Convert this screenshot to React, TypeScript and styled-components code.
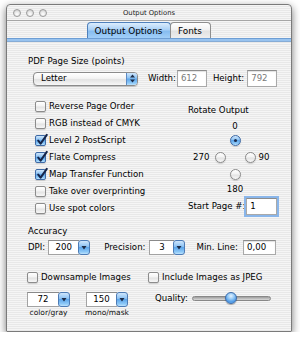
import React from "react";
import styled, { createGlobalStyle } from "styled-components";

const Global = createGlobalStyle`
  html, body { margin: 0; padding: 0; background: #ffffff; }
  body { font-family: "DejaVu Sans", "Liberation Sans", sans-serif; color: #000; }
  * { box-sizing: border-box; }
`;

const aquaBlue = "linear-gradient(to bottom, #cfe6fc 0%, #8cc2f3 42%, #5ea6ea 50%, #8fcaf8 85%, #bfe4fd 100%)";
const aquaWhite = "linear-gradient(to bottom, #ffffff 0%, #f3f3f3 45%, #e3e3e3 55%, #f7f7f7 100%)";

const Window = styled.div`
  margin: 4px 0 0 6px;
  width: 286px;
  height: 328px;
  border: 1px solid #7a7a7a;
  border-radius: 4px 4px 1px 1px;
  box-shadow: 0 3px 8px rgba(0, 0, 0, 0.55);
  background: repeating-linear-gradient(to bottom, #f5f5f5 0px, #f5f5f5 1px, #e8e8e8 1px, #e8e8e8 2px);
  display: flex;
  flex-direction: column;
  overflow: hidden;
`;

const TitleBar = styled.div`
  height: 16px;
  border-bottom: 1px solid #a6a6a6;
  display: grid;
  grid-template-columns: 1fr auto 1fr;
  align-items: center;
  padding: 0 6px;
`;

const Lights = styled.div`
  display: flex;
  gap: 5px;
`;

const Light = styled.span`
  width: 8px;
  height: 8px;
  border-radius: 50%;
  border: 1px solid #9c9c9c;
  background: radial-gradient(circle at 50% 70%, #ffffff 0%, #e6e6e6 50%, #c4c4c4 100%);
`;

const Title = styled.span`
  font-size: 6.8px;
  line-height: 10px;
  color: #222;
`;

const TabBar = styled.div`
  height: 17px;
  display: flex;
  justify-content: center;
  align-items: flex-end;
  padding-right: 1px;
`;

const Tab = styled.div<{ $active?: boolean; $w: number }>`
  width: ${(p) => p.$w}px;
  height: 16px;
  display: flex;
  align-items: center;
  justify-content: center;
  font-size: 8.9px;
  margin-left: ${(p) => (p.$active ? 0 : -1)}px;
  border: 1px solid ${(p) => (p.$active ? "#4f80bb" : "#8e8e8e")};
  border-bottom: none;
  border-radius: 4px 4px 0 0;
  background: ${(p) =>
    p.$active
      ? "linear-gradient(to bottom, #dcedfd 0%, #a9d0f6 45%, #86bcf0 55%, #a2cff8 100%)"
      : "linear-gradient(to bottom, #ffffff 0%, #f1f1f1 45%, #e2e2e2 55%, #eeeeee 100%)"};
`;

const Band = styled.div`
  height: 4px;
  border-top: 1px solid #6e9ed4;
  border-bottom: 1px solid #86acd6;
  background: #98c3ef;
`;

const Content = styled.div`
  display: flex;
  flex-direction: column;
  padding-left: 21px;
`;

const Text = styled.span<{ $gray?: boolean }>`
  font-size: 8.6px;
  line-height: 11px;
  white-space: nowrap;
  color: ${(p) => (p.$gray ? "#7a7a7a" : "#000")};
`;

const SectionLabel = styled(Text)<{ $mt: number }>`
  display: block;
  margin-top: ${(p) => p.$mt}px;
`;

const Row = styled.div<{ $mt: number; $ml?: number }>`
  display: flex;
  align-items: center;
  height: 17px;
  margin-top: ${(p) => p.$mt}px;
  margin-left: ${(p) => p.$ml ?? 0}px;
`;

const Gap = styled.span<{ $w: number }>`
  display: inline-block;
  width: ${(p) => p.$w}px;
  flex: none;
`;

const PopUp = styled.div`
  width: 105px;
  height: 14px;
  border: 1px solid #8b8b8b;
  border-radius: 4px;
  background: ${aquaWhite};
  box-shadow: 0 1px 1px rgba(0, 0, 0, 0.18);
  display: flex;
  align-items: center;
  justify-content: space-between;
  overflow: hidden;
`;

const PopUpLabel = styled(Text)`
  padding-left: 7px;
`;

const PopUpArrows = styled.span`
  width: 11px;
  align-self: stretch;
  background: ${aquaBlue};
  border-left: 1px solid #5c8ac4;
  display: flex;
  align-items: center;
  justify-content: center;
`;

const Field = styled.div<{ $w: number; $h?: number; $focus?: boolean }>`
  width: ${(p) => p.$w}px;
  height: ${(p) => p.$h ?? 17}px;
  background: #ffffff;
  border: 1px solid #a9a9a9;
  border-top-color: #8c8c8c;
  box-shadow: ${(p) => (p.$focus ? "0 0 0 2px #8ab6ea" : "inset 0 1px 1px rgba(0,0,0,0.12)")};
  display: flex;
  align-items: center;
  padding-left: 3px;
`;

const Options = styled.div`
  display: flex;
  margin-top: 11px;
`;

const CheckColumn = styled.div`
  width: 160px;
  display: flex;
  flex-direction: column;
  padding-left: 7px;
`;

const CheckRow = styled.label<{ $h?: number }>`
  display: flex;
  align-items: center;
  gap: 3px;
  height: ${(p) => p.$h ?? 17}px;
`;

const Box = styled.span<{ $checked?: boolean }>`
  position: relative;
  width: 11px;
  height: 11px;
  flex: none;
  border-radius: 2px;
  border: 1px solid ${(p) => (p.$checked ? "#3e6aa6" : "#8c8c8c")};
  background: ${(p) => (p.$checked ? aquaBlue : aquaWhite)};
  box-shadow: 0 1px 1px rgba(0, 0, 0, 0.15);
`;

const CheckMark = styled.svg`
  position: absolute;
  left: 0px;
  top: -2px;
  overflow: visible;
`;

const RotateColumn = styled.div`
  display: flex;
  flex-direction: column;
`;

const RotateLabel = styled(Text)`
  display: block;
  margin-top: 7px;
`;

const Compass = styled.div`
  width: 94px;
  display: flex;
  flex-direction: column;
  align-items: center;
`;

const CompassText = styled(Text)<{ $mt: number }>`
  display: block;
  margin-top: ${(p) => p.$mt}px;
`;

const Radio = styled.span<{ $on?: boolean; $mt?: number }>`
  display: flex;
  align-items: center;
  justify-content: center;
  width: 11px;
  height: 11px;
  flex: none;
  margin-top: ${(p) => p.$mt ?? 0}px;
  border-radius: 50%;
  border: 1px solid ${(p) => (p.$on ? "#3d69a5" : "#8a8a8a")};
  background: ${(p) => (p.$on ? aquaBlue : aquaWhite)};
  box-shadow: 0 1px 1px rgba(0, 0, 0, 0.15);
`;

const RadioDot = styled.span`
  width: 3px;
  height: 3px;
  border-radius: 50%;
  background: #1b2c4e;
`;

const CompassRow = styled.div`
  display: grid;
  grid-template-columns: 1fr 11px 19px 11px 1fr;
  align-items: center;
  width: 100%;
  height: 11px;
  margin-top: 6px;
`;

const DegLeft = styled(Text)`
  text-align: right;
  padding-right: 5px;
`;

const DegRight = styled(Text)`
  grid-column: 5;
  padding-left: 3px;
`;

const Combo = styled.div<{ $w: number }>`
  display: flex;
  width: ${(p) => p.$w}px;
  height: 15px;
  flex: none;
`;

const ComboField = styled.div`
  flex: 1;
  background: #ffffff;
  border: 1px solid #a3a3a3;
  border-top-color: #8a8a8a;
  border-right: none;
  display: flex;
  align-items: center;
  justify-content: center;
  padding-right: 1px;
`;

const ComboButton = styled.div`
  width: 12px;
  height: 15px;
  border-radius: 3px;
  border: 1px solid #4d7bb5;
  background: ${aquaBlue};
  display: flex;
  align-items: center;
  justify-content: center;
  margin-left: -1px;
`;

const Bottom = styled.div`
  display: grid;
  grid-template-columns: 121px 1fr;
  margin-top: 13px;
  margin-left: -1px;
`;

const BottomColumn = styled.div`
  display: flex;
  flex-direction: column;
`;

const PopRow = styled.div`
  display: flex;
  gap: 15px;
  margin-top: 6px;
`;

const PopGroup = styled.div`
  display: flex;
  flex-direction: column;
  align-items: center;
  gap: 1px;
`;

const Caption = styled.span`
  font-size: 7.5px;
  line-height: 9px;
  white-space: nowrap;
  color: #111;
`;

const QualityRow = styled.div`
  display: flex;
  align-items: center;
  height: 14px;
  margin-top: 5px;
  padding-left: 7px;
  gap: 4px;
`;

const Slider = styled.div`
  position: relative;
  width: 79px;
  height: 14px;
  display: flex;
  align-items: center;
`;

const Track = styled.div`
  width: 100%;
  height: 5px;
  border-radius: 3px;
  border: 1px solid #888888;
  background: linear-gradient(to bottom, #9d9d9d, #d9d9d9);
`;

const Knob = styled.div`
  position: absolute;
  left: 33px;
  top: 1px;
  width: 12px;
  height: 12px;
  border-radius: 50%;
  border: 1px solid #3c6cab;
  background: radial-gradient(circle at 50% 30%, #e4f2fe 0%, #8ec5f5 40%, #4f9ae6 70%, #8ccaf8 100%);
  box-shadow: 0 1px 1px rgba(0, 0, 0, 0.3);
`;

const UpDown = () => (
  <svg width="7" height="9" viewBox="0 0 7 9">
    <path d="M3.5 0.5 L6 3.5 L1 3.5 Z" fill="#1d2c48" />
    <path d="M3.5 8.5 L6 5.5 L1 5.5 Z" fill="#1d2c48" />
  </svg>
);

const Down = () => (
  <svg width="6" height="5" viewBox="0 0 6 5">
    <path d="M0.5 1 L5.5 1 L3 4.5 Z" fill="#1d2c48" />
  </svg>
);

const Check: React.FC<{ label: string; checked?: boolean; h?: number }> = ({ label, checked, h }) => (
  <CheckRow $h={h}>
    <Box $checked={checked}>
      {checked && (
        <CheckMark width="12" height="12" viewBox="0 0 12 12">
          <path d="M2.2 6.6 L4.6 9.6 L10.8 0.8" fill="none" stroke="#15254a" strokeWidth="2" strokeLinecap="round" strokeLinejoin="round" />
        </CheckMark>
      )}
    </Box>
    <Text>{label}</Text>
  </CheckRow>
);

const ComboBox: React.FC<{ value: string; w: number }> = ({ value, w }) => (
  <Combo $w={w}>
    <ComboField>
      <Text>{value}</Text>
    </ComboField>
    <ComboButton>
      <Down />
    </ComboButton>
  </Combo>
);

export default function App() {
  return (
    <>
      <Global />
      <Window>
        <TitleBar>
          <Lights>
            <Light />
            <Light />
            <Light />
          </Lights>
          <Title>Output Options</Title>
          <span />
        </TitleBar>
        <TabBar>
          <Tab $active $w={84}>Output Options</Tab>
          <Tab $w={41}>Fonts</Tab>
        </TabBar>
        <Band />
        <Content>
          <SectionLabel $mt={14}>PDF Page Size (points)</SectionLabel>
          <Row $mt={3} $ml={5}>
            <PopUp>
              <PopUpLabel>Letter</PopUpLabel>
              <PopUpArrows>
                <UpDown />
              </PopUpArrows>
            </PopUp>
            <Gap $w={10} />
            <Text>Width:</Text>
            <Gap $w={1} />
            <Field $w={30}>
              <Text $gray>612</Text>
            </Field>
            <Gap $w={6} />
            <Text>Height:</Text>
            <Gap $w={3} />
            <Field $w={30}>
              <Text $gray>792</Text>
            </Field>
          </Row>

          <Options>
            <CheckColumn>
              <Check label="Reverse Page Order" />
              <Check label="RGB instead of CMYK" />
              <Check label="Level 2 PostScript" checked />
              <Check label="Flate Compress" checked />
              <Check label="Map Transfer Function" checked />
              <Check label="Take over overprinting" />
              <Check label="Use spot colors" />
            </CheckColumn>
            <RotateColumn>
              <RotateLabel>Rotate Output</RotateLabel>
              <Compass>
                <CompassText $mt={5}>0</CompassText>
                <Radio $on $mt={3}>
                  <RadioDot />
                </Radio>
                <CompassRow>
                  <DegLeft>270</DegLeft>
                  <Radio />
                  <span />
                  <Radio />
                  <DegRight>90</DegRight>
                </CompassRow>
                <Radio $mt={6} />
                <CompassText $mt={4}>180</CompassText>
              </Compass>
              <Row $mt={3}>
                <Text>Start Page #:</Text>
                <Gap $w={1} />
                <Field $w={31} $focus>
                  <Text>1</Text>
                </Field>
              </Row>
            </RotateColumn>
          </Options>

          <SectionLabel $mt={9}>Accuracy</SectionLabel>
          <Row $mt={2}>
            <Text>DPI:</Text>
            <Gap $w={3} />
            <ComboBox value="200" w={42} />
            <Gap $w={14} />
            <Text>Precision:</Text>
            <Gap $w={4} />
            <ComboBox value="3" w={36} />
            <Gap $w={11} />
            <Text>Min. Line:</Text>
            <Gap $w={5} />
            <Field $w={33} $h={15}>
              <Text>0,00</Text>
            </Field>
          </Row>

          <Bottom>
            <BottomColumn>
              <Check label="Downsample Images" />
              <PopRow>
                <PopGroup>
                  <ComboBox value="72" w={43} />
                  <Caption>color/gray</Caption>
                </PopGroup>
                <PopGroup>
                  <ComboBox value="150" w={42} />
                  <Caption>mono/mask</Caption>
                </PopGroup>
              </PopRow>
            </BottomColumn>
            <BottomColumn>
              <Check label="Include Images as JPEG" />
              <QualityRow>
                <Text>Quality:</Text>
                <Slider>
                  <Track />
                  <Knob />
                </Slider>
              </QualityRow>
            </BottomColumn>
          </Bottom>
        </Content>
      </Window>
    </>
  );
}
